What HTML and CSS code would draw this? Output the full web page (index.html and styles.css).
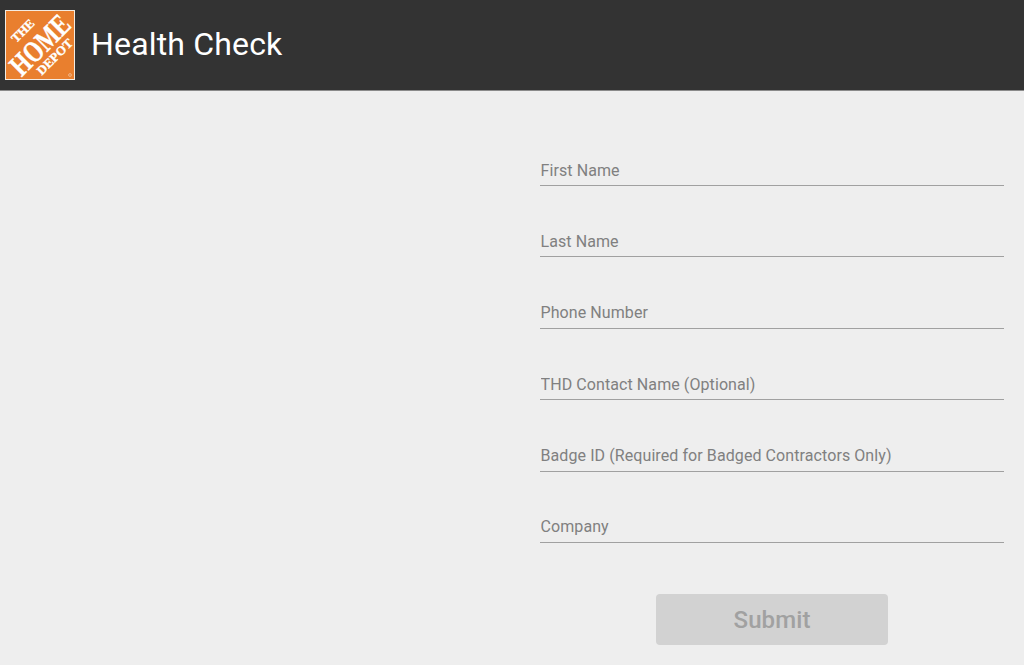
FILE: index.html
```html
<!DOCTYPE html>
<html lang="en">
<head>
    <meta charset="UTF-8">
    <title>Health Check</title>
    <link rel="stylesheet" href="styles.css">
</head>
<body>
    <header class="app-header">
        <svg class="logo" viewBox="0 0 70 70" width="70" height="70">
            <rect x="0.5" y="0.5" width="69" height="69" fill="#e97f2e" stroke="#f4ece2"/>
            <g transform="rotate(-45 35 35)" fill="#fff" stroke="#fff" stroke-width="0.35" font-family="'Liberation Serif', serif" font-weight="700" text-anchor="middle">
                <text x="33" y="17" font-size="12.5" textLength="27" lengthAdjust="spacingAndGlyphs">THE</text>
                <text x="35" y="45" font-size="30" textLength="72" lengthAdjust="spacingAndGlyphs">HOME</text>
                <text x="37" y="58" font-size="12.5" textLength="45" lengthAdjust="spacingAndGlyphs">DEPOT</text>
            </g>
            <circle cx="65" cy="65" r="1.4" fill="none" stroke="#f5d9c0" stroke-width="0.6"/>
        </svg>
        <h1 class="app-title">Health Check</h1>
    </header>
    <main class="content">
        <form class="health-form">
            <input class="field" type="text" placeholder="First Name">
            <input class="field" type="text" placeholder="Last Name">
            <input class="field" type="text" placeholder="Phone Number">
            <input class="field" type="text" placeholder="THD Contact Name (Optional)">
            <input class="field" type="text" placeholder="Badge ID (Required for Badged Contractors Only)">
            <input class="field" type="text" placeholder="Company">
            <button class="submit-btn" type="button" disabled>Submit</button>
        </form>
    </main>
</body>
</html>
```

FILE: styles.css
```css
* {
    margin: 0;
    padding: 0;
    box-sizing: border-box;
}

html, body {
    height: 100%;
    overflow: hidden;
}

body {
    font-family: Roboto, "Liberation Sans", sans-serif;
    background: #eeeeee;
}

.app-header {
    display: flex;
    align-items: center;
    gap: 16px;
    height: 91px;
    padding: 0 0 3px 5px;
    background: #333333;
    border-bottom: 1px solid #8a8a8a;
}

.logo {
    display: block;
    flex-shrink: 0;
    margin-top: 2px;
    overflow: visible;
}

.app-title {
    font-size: 32px;
    font-weight: 400;
    letter-spacing: 0.17px;
    color: #ffffff;
}

.content {
    display: flex;
    justify-content: flex-end;
    padding: 0 20px 0 0;
}

.health-form {
    display: flex;
    flex-direction: column;
    width: 464px;
    padding-top: 59px;
}

.field {
    display: block;
    height: 36px;
    margin-bottom: 35.4px;
    padding: 5px 0 0 0.5px;
    font-family: inherit;
    font-size: 16px;
    letter-spacing: 0.085px;
    color: #808080;
    background: transparent;
    border: none;
    border-bottom: 1px solid #a0a0a0;
    outline: none;
}

.field::placeholder {
    color: #808080;
    opacity: 1;
}

.submit-btn {
    align-self: center;
    width: 232px;
    height: 51px;
    margin-top: 16px;
    font-family: inherit;
    font-size: 24px;
    font-weight: 500;
    letter-spacing: 0.1px;
    color: #a1a1a1;
    background: #d2d2d2;
    border: none;
    border-radius: 4px;
}
```
